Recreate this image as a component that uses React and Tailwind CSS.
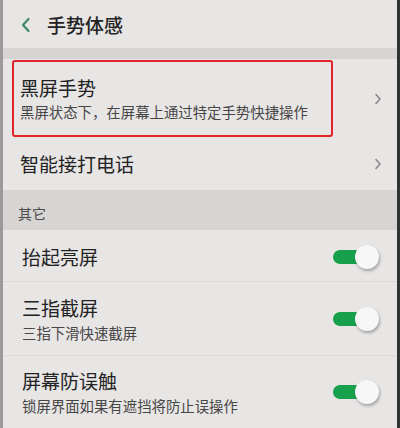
import React from 'react'

const font = { fontFamily: '"Noto Sans CJK SC", "Noto Sans", sans-serif' }

const Chevron = () => (
  <svg width="8" height="12" viewBox="0 0 8 12" className="shrink-0">
    <path d="M2 1.5 L6 6 L2 10.5" fill="none" stroke="#8a8888" strokeWidth="1.6" strokeLinecap="round" strokeLinejoin="round" />
  </svg>
)

const Toggle = () => (
  <div className="relative w-[46px] h-[24px] shrink-0">
    <div className="absolute left-0 top-[5px] w-[36px] h-[14px] rounded-full bg-[#17a04c]" />
    <div className="absolute right-0 top-0 w-[24px] h-[24px] rounded-full bg-[#f7f7f7] shadow-[1px_2px_3px_rgba(0,0,0,0.3)]" />
  </div>
)

const ToggleRow = ({ title, desc, h, last, extra }) => (
  <div className={`flex items-center justify-between pl-[19px] pr-[18px] ${h} ${extra || ''} ${last ? '' : 'border-b border-[#dcd9d9]'}`}>
    <div className="flex flex-col">
      <span className="text-[19px] leading-[26px] text-[#222]">{title}</span>
      {desc && <span className="text-[14.4px] leading-[20px] text-[#474646] mt-[2px]">{desc}</span>}
    </div>
    <Toggle />
  </div>
)

export default function App() {
  return (
    <div className="w-[400px] h-[428px] overflow-hidden flex bg-[#e8e5e5]" style={font}>
      <div className="w-[3px] bg-[#9b9999]" />
      <div className="flex-1 flex flex-col">
        <div className="h-[48px] flex items-center gap-[15px] pl-[17px] pt-[2px]">
          <svg width="12" height="16" viewBox="0 0 12 16">
            <path d="M8.5 2 L3 8 L8.5 14" fill="none" stroke="#3d8a68" strokeWidth="2.2" strokeLinecap="round" strokeLinejoin="round" />
          </svg>
          <span className="text-[19px] font-medium text-[#222]">手势体感</span>
        </div>
        <div className="h-[11px] bg-[#d7d4d4]" />
        <div className="h-[80px] flex items-center pr-[15px]">
          <div className="ml-[9px] w-[321px] h-[77px] border-2 border-[#e3222b] rounded-[3px] flex flex-col justify-center pl-[6px]">
            <span className="text-[19px] leading-[26px] text-[#222]">黑屏手势</span>
            <span className="text-[14.4px] leading-[20px] text-[#474646] mt-[1px]">黑屏状态下，在屏幕上通过特定手势快捷操作</span>
          </div>
          <div className="ml-auto"><Chevron /></div>
        </div>
        <div className="h-[52px] flex items-center justify-between pl-[17px] pr-[15px]">
          <span className="text-[19px] text-[#222]">智能接打电话</span>
          <Chevron />
        </div>
        <div className="h-[40px] bg-[#d7d4d4] flex items-end pl-[15px] pb-[6px]">
          <span className="text-[14px] text-[#4d4b4b]">其它</span>
        </div>
        <ToggleRow title="抬起亮屏" h="h-[52px]" extra="pt-[3px]" />
        <ToggleRow title="三指截屏" desc="三指下滑快速截屏" h="h-[75px]" />
        <ToggleRow title="屏幕防误触" desc="锁屏界面如果有遮挡将防止误操作" h="h-[72px]" last />
      </div>
      <div className="w-[3px] bg-[#2f3432]" />
    </div>
  )
}
